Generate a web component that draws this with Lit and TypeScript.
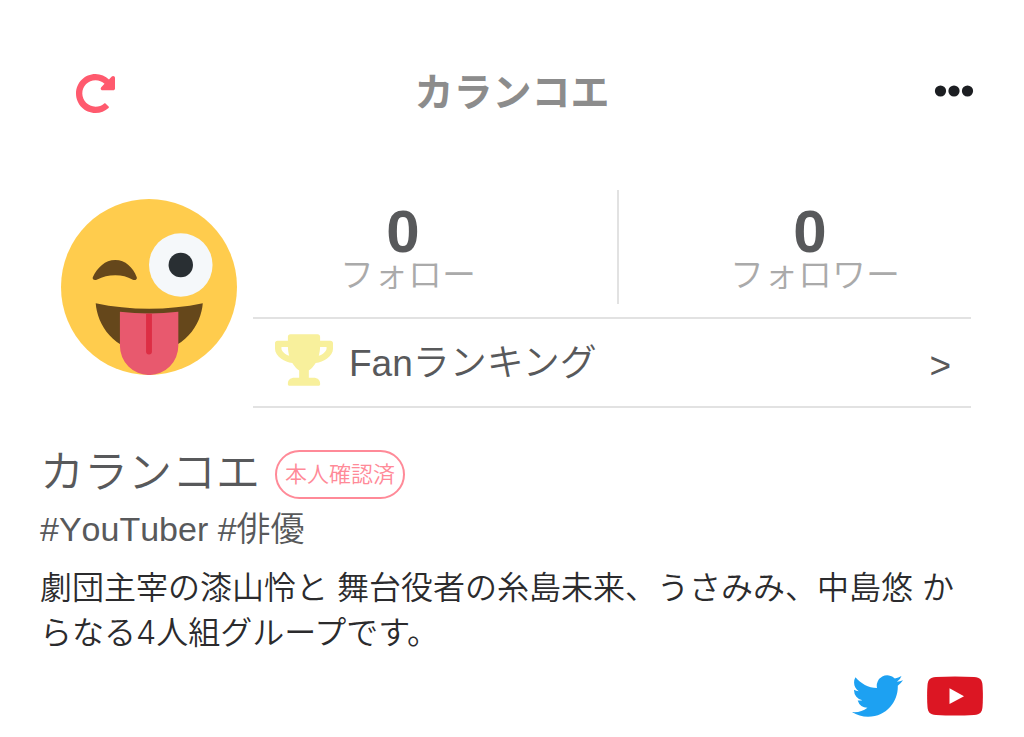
import { LitElement, html, css, svg } from "lit";
import { customElement, property } from "lit/decorators.js";

const reloadIcon = svg`<svg class="reload" viewBox="8 8 496 496" aria-hidden="true"><path fill="#ff5a6e" d="M256.455 8c66.269.119 126.437 26.233 170.859 68.685l35.715-35.715C478.149 25.851 504 36.559 504 57.941V192c0 13.255-10.745 24-24 24H345.941c-21.382 0-32.09-25.851-16.971-40.971l41.75-41.75c-30.864-28.899-70.801-44.907-113.23-45.273-92.398-.798-170.283 73.977-169.484 169.442C88.764 348.009 162.184 424 256 424c41.127 0 79.997-14.678 110.629-41.556 4.743-4.161 11.906-3.908 16.368.553l39.662 39.662c4.872 4.872 4.631 12.815-.482 17.433C378.202 479.813 319.926 504 256 504 119.034 504 8.001 392.967 8 256.002 7.999 119.193 119.646 7.755 256.455 8z"/></svg>`;

const dotsIcon = svg`<svg class="dots" viewBox="0 0 40 12" aria-hidden="true"><g fill="#1c1e22"><circle cx="6.500" cy="6" r="5.600"/><circle cx="20" cy="6" r="5.600"/><circle cx="33.500" cy="6" r="5.600"/></g></svg>`;

const avatarIcon = svg`<svg class="avatar" viewBox="0 0 36 36" role="img" aria-label="avatar">
  <circle cx="18" cy="18" r="18" fill="#ffcc4d"/>
  <path fill="#65471b" d="M6.500 16C7.500 14 9 12.500 11.100 12.500S14.700 14 15.500 16c.15.45-.4.75-.8.5-1.200-.6-2.200-.9-3.600-.9s-2.500.3-3.800.9c-.5.2-.95-.1-.8-.5z"/>
  <circle cx="24.500" cy="13.500" r="6.500" fill="#f5f8fa"/>
  <circle cx="24.500" cy="13.500" r="2.500" fill="#292f33"/>
  <path fill="#65471b" d="M7.100 21.300C14 22.800 22 22.800 29 21.300C28.700 25.600 25.300 31.200 18 31.200S7.400 25.600 7.100 21.300z"/>
  <path fill="#e8596e" d="M12.050 23.050Q18 23.800 24 23.050V30a5.970 6 0 0 1-11.950 0z"/>
  <path fill="#dd2e44" d="M17.400 23.450h1.200v7.750a.6.6 0 0 1-1.200 0z"/>
</svg>`;

const trophyIcon = svg`<svg class="trophy" viewBox="0 0 576 512" aria-hidden="true"><path fill="#f8f09c" d="M552 64H448V24c0-13.300-10.700-24-24-24H152c-13.300 0-24 10.700-24 24v40H24C10.700 64 0 74.700 0 88v56c0 35.700 22.500 72.400 61.900 100.700 31.500 22.700 69.800 37.100 110 41.700C203.300 338.500 240 360 240 360v72h-48c-35.300 0-64 20.700-64 56v12c0 6.600 5.400 12 12 12h296c6.600 0 12-5.400 12-12v-12c0-35.300-28.700-56-64-56h-48v-72s36.700-21.500 68.100-73.600c40.300-4.600 78.600-19 110-41.700 39.300-28.300 61.900-65 61.900-100.700V88c0-13.300-10.700-24-24-24zM99.300 192.800C74.900 175.200 64 155.600 64 144v-16h64.200c1 32.600 5.800 61.200 12.800 86.200-15.100-5.200-29.200-12.400-41.700-21.400zM512 144c0 16.100-17.700 36.100-35.300 48.800-12.500 9-26.700 16.200-41.800 21.400 7-25 11.800-53.600 12.800-86.200H512v16z"/></svg>`;

const twitterIcon = svg`<svg class="twitter" viewBox="0 2.200 24 19.600" aria-hidden="true"><path fill="#1da1f2" d="M23.953 4.570a10 10 0 01-2.825.775 4.958 4.958 0 002.163-2.723c-.951.555-2.005.959-3.127 1.184a4.920 4.920 0 00-8.384 4.482C7.690 8.095 4.067 6.130 1.640 3.162a4.822 4.822 0 00-.666 2.475c0 1.710.870 3.213 2.188 4.096a4.904 4.904 0 01-2.228-.616v.060a4.923 4.923 0 003.946 4.827 4.996 4.996 0 01-2.212.085 4.936 4.936 0 004.604 3.417 9.867 9.867 0 01-6.102 2.105c-.390 0-.779-.023-1.170-.067a13.995 13.995 0 007.557 2.209c9.053 0 13.998-7.496 13.998-13.985 0-.210 0-.420-.015-.630A9.935 9.935 0 0024 4.590z"/></svg>`;

const youtubeIcon = svg`<svg class="youtube" viewBox="0 0 56 40" aria-hidden="true"><path fill="#dc1623" d="M9 1Q28 0 47 1C53.500 1.400 55 4 55.500 9Q56.300 20 55.500 31C55 36 53.500 38.600 47 39Q28 40 9 39C2.500 38.600 1 36 .5 31Q-.3 20 .5 9C1 4 2.500 1.400 9 1z"/><path fill="#fff" d="M22.500 12.300 37 20.200 22.500 28z"/></svg>`;

@customElement("profile-stat")
class ProfileStat extends LitElement {
  @property() label = "";
  @property({ type: Number }) count = 0;

  static styles = css`
    :host { display: block; text-align: center; }
    .link { display: block; color: inherit; text-decoration: none; }
    .count {
      display: block;
      padding: 16px 10px 0 0;
      color: #58595b;
      font-family: "Liberation Sans", sans-serif;
      font-size: 60px;
      font-weight: 700;
      line-height: 52px;
    }
    .label { display: block; color: #aaa; font-size: 34px; font-weight: 350; line-height: 30px; }
  `;

  render() {
    return html`<a class="link" href="#"><span class="count">${this.count}</span><span class="label">${this.label}</span></a>`;
  }
}

@customElement("app-root")
class AppRoot extends LitElement {
  static styles = css`
    :host {
      display: block;
      background: #fff;
      color: #58595b;
      font-family: "Noto Sans CJK JP", sans-serif;
    }
    * { box-sizing: border-box; }
    svg { display: block; }
    a { color: inherit; text-decoration: none; }
    h1, h2, p { margin: 0; }
    .header {
      display: grid;
      grid-template-columns: 1fr auto 1fr;
      align-items: center;
      padding: 67px 50px 0 76px;
    }
    .icon-button { padding: 0; border: 0; background: none; cursor: pointer; }
    .refresh { justify-self: start; padding-top: 5px; }
    .more { justify-self: end; }
    .reload { width: 39px; height: 39px; }
    .dots { width: 40px; height: 12px; }
    .title { padding: 0 26px 4px 0; color: #8c8c8c; font-size: 39px; font-weight: 700; line-height: 44px; }
    .summary { display: flex; gap: 16px; padding: 75px 53px 0 61px; }
    .avatar { flex: none; width: 176px; height: 176px; margin-top: 9px; }
    .panel { flex: 1; }
    .stats {
      display: grid;
      grid-template-columns: 366px 1fr;
      padding-bottom: 13px;
      border-bottom: 2px solid #e2e2e2;
    }
    .follow { height: 114px; padding-right: 54px; border-right: 2px solid #e2e2e2; }
    .follower { padding-left: 40px; }
    .ranking {
      display: flex;
      align-items: center;
      gap: 16px;
      height: 89px;
      padding: 0 20px 5px 22px;
      border-bottom: 2px solid #e2e2e2;
      font-family: "Liberation Sans", "Noto Sans CJK JP", sans-serif;
      font-size: 37px;
    }
    .trophy { width: 58px; height: 52px; }
    .ranking-label { flex: 1; font-weight: 350; }
    .arrow { padding-top: 12px; }
    .about { padding: 42px 40px 0; }
    .identity { display: flex; align-items: center; gap: 15px; }
    .name { padding-bottom: 12px; font-size: 44px; font-weight: 350; line-height: 36px; }
    .badge {
      padding: 0 8px 4px;
      border: 2px solid #ff8a98;
      border-radius: 25px;
      color: #ff8a98;
      font-size: 22px;
      font-weight: 350;
      line-height: 41px;
    }
    .tags {
      padding-top: 8px;
      font-family: "Liberation Sans", "Noto Sans CJK JP", sans-serif;
      font-size: 34px;
      font-weight: 350;
      font-kerning: none;
      line-height: 44px;
    }
    .bio {
      padding: 14px 12px 0 0;
      color: #2b2b2d;
      font-family: Inter, "Noto Sans CJK JP", sans-serif;
      font-size: 32px;
      font-weight: 350;
      line-height: 45px;
    }
    .social { display: flex; justify-content: flex-end; align-items: center; gap: 24px; padding: 20px 41px 20px; }
    .twitter { width: 51px; height: 42px; }
    .youtube { width: 56px; height: 40px; }
  `;

  render() {
    return html`
      <header class="header">
        <button class="icon-button refresh" aria-label="更新">${reloadIcon}</button>
        <h1 class="title">カランコエ</h1>
        <button class="icon-button more" aria-label="メニュー">${dotsIcon}</button>
      </header>
      <main>
        <section class="summary">
          ${avatarIcon}
          <div class="panel">
            <div class="stats">
              <profile-stat class="follow" label="フォロー" .count=${0}></profile-stat>
              <profile-stat class="follower" label="フォロワー" .count=${0}></profile-stat>
            </div>
            <a class="ranking" href="#">
              ${trophyIcon}
              <span class="ranking-label">Fanランキング</span>
              <span class="arrow">&gt;</span>
            </a>
          </div>
        </section>
        <section class="about">
          <div class="identity">
            <h2 class="name">カランコエ</h2>
            <span class="badge">本人確認済</span>
          </div>
          <p class="tags"><a href="#">#YouTuber</a> <a href="#">#俳優</a></p>
          <p class="bio">劇団主宰の漆山怜と 舞台役者の糸島未来、うさみみ、中島悠 からなる4人組グループです。</p>
        </section>
        <nav class="social">
          <a href="#" aria-label="Twitter">${twitterIcon}</a>
          <a href="#" aria-label="YouTube">${youtubeIcon}</a>
        </nav>
      </main>
    `;
  }
}
